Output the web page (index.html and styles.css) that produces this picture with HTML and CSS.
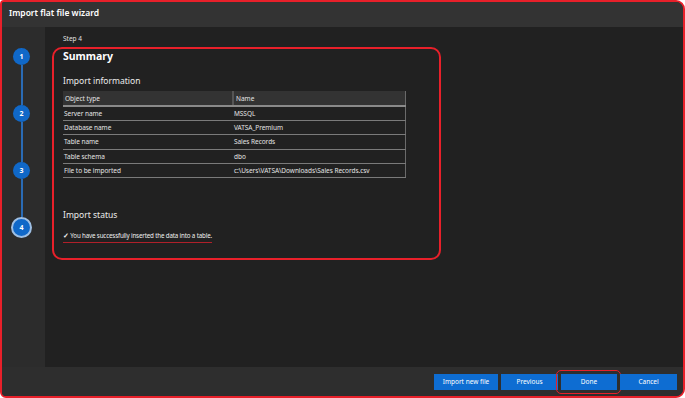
FILE: index.html
```html
<!DOCTYPE html>
<html lang="en">
<head>
    <meta charset="UTF-8">
    <title>Import flat file wizard</title>
    <link rel="stylesheet" href="styles.css">
</head>
<body>
    <div class="window">
        <div class="titlebar">Import flat file wizard</div>

        <div class="wizard">
            <div class="steps">
                <div class="step">1</div>
                <div class="link"></div>
                <div class="step">2</div>
                <div class="link"></div>
                <div class="step">3</div>
                <div class="link short"></div>
                <div class="step current">4</div>
            </div>

            <div class="content">
                <div class="step-label">Step 4</div>
                <div class="summary">
                    <h1 class="summary-title">Summary</h1>
                    <h2 class="section-title">Import information</h2>
                    <table class="info-table">
                        <tr><th>Object type</th><th>Name</th></tr>
                        <tr><td>Server name</td><td>MSSQL</td></tr>
                        <tr><td>Database name</td><td>VATSA_Premium</td></tr>
                        <tr><td>Table name</td><td>Sales Records</td></tr>
                        <tr><td>Table schema</td><td>dbo</td></tr>
                        <tr><td>File to be imported</td><td>c:\Users\VATSA\Downloads\Sales Records.csv</td></tr>
                    </table>
                    <h2 class="section-title status-title">Import status</h2>
                    <p class="status-text"><span class="tick">✓</span> You have successfully inserted the data into a table.</p>
                </div>
            </div>
        </div>

        <div class="footer">
            <button class="btn wide">Import new file</button>
            <button class="btn">Previous</button>
            <button class="btn marked">Done</button>
            <button class="btn">Cancel</button>
        </div>
    </div>
</body>
</html>
```

FILE: styles.css
```css
* {
    margin: 0;
    padding: 0;
    box-sizing: border-box;
}

body {
    font-family: 'Noto Sans', 'Open Sans', sans-serif;
    background-color: #ffffff;
    color: #e8e8e8;
    width: 685px;
    height: 398px;
    overflow: hidden;
}

.window {
    width: 685px;
    height: 398px;
    border: 2px solid #e8202a;
    border-radius: 4px 9px 9px 6px;
    background-color: #2c2c2c;
    display: flex;
    flex-direction: column;
    overflow: hidden;
}

.titlebar {
    height: 25px;
    background-color: #333333;
    font-size: 8.5px;
    font-weight: 600;
    color: #ffffff;
    padding: 5px 0 0 7px;
    flex-shrink: 0;
}

.wizard {
    flex: 1;
    display: flex;
}

.steps {
    width: 43px;
    flex-shrink: 0;
    display: flex;
    flex-direction: column;
    align-items: center;
    padding-top: 21px;
    padding-right: 4px;
}

.step {
    width: 17px;
    height: 17px;
    border-radius: 50%;
    background-color: #1068c8;
    color: #ffffff;
    font-size: 7px;
    font-weight: 700;
    display: flex;
    align-items: center;
    justify-content: center;
}

.step.current {
    width: 21px;
    height: 21px;
    border: 2px solid #9ebfe4;
}

.link {
    width: 2px;
    height: 40px;
    background-color: #2a6bb5;
}

.link.short {
    height: 38px;
}

.content {
    flex: 1;
    background-color: #212121;
    padding: 7px 0 0 7px;
}

.step-label {
    font-size: 6.5px;
    padding-left: 11px;
    height: 13px;
    color: #e0e0e0;
}

.summary {
    width: 389px;
    height: 213px;
    border: 2px solid #e8202a;
    border-radius: 10px;
    padding: 0 0 0 9px;
}

.summary-title {
    font-size: 10.5px;
    font-weight: 700;
    line-height: 14px;
    color: #ffffff;
}

.section-title {
    font-size: 8.5px;
    font-weight: 400;
    margin-top: 12px;
    line-height: 12px;
    color: #ececec;
}

.info-table {
    margin-top: 4px;
    width: 343px;
    border-collapse: collapse;
    font-size: 6.5px;
    color: #e4e4e4;
}

.info-table th {
    background-color: #333333;
    border-bottom: 2px solid #8a8a8a;
    border-right: 1px solid #6a6a6a;
    font-weight: 400;
    text-align: left;
    height: 15px;
    padding: 0 2px;
}

.info-table th:first-child {
    width: 170px;
    border-right: 2px solid #555555;
}

.info-table td {
    border-bottom: 1px solid #7a7a7a;
    border-right: 1px solid #6a6a6a;
    height: 14.4px;
    padding: 0 1px;
    letter-spacing: -0.05px;
}

.info-table td:first-child {
    border-right: none;
}

.status-title {
    margin-top: 31px;
}

.status-text {
    display: inline-block;
    margin-top: 8px;
    font-size: 6.2px;
    letter-spacing: -0.15px;
    padding-bottom: 2px;
    border-bottom: 1.5px solid #b0202a;
    color: #f0f0f0;
}

.tick {
    font-weight: 700;
    font-size: 7px;
}

.footer {
    height: 29px;
    flex-shrink: 0;
    background-color: #2e2e2e;
    display: flex;
    justify-content: flex-end;
    align-items: center;
    gap: 3px;
    padding-right: 6px;
}

.btn {
    position: relative;
    width: 57px;
    height: 16px;
    border: none;
    background-color: #0e6dd2;
    color: #ffffff;
    font-family: inherit;
    font-size: 6.5px;
}

.btn.wide {
    width: 64px;
}

.btn.marked {
    width: 56px;
}

.btn.marked::after {
    content: "";
    position: absolute;
    top: -4px;
    bottom: -4px;
    left: -5px;
    right: -4px;
    border: 1.5px solid #e8202a;
    border-radius: 5px;
}
```
